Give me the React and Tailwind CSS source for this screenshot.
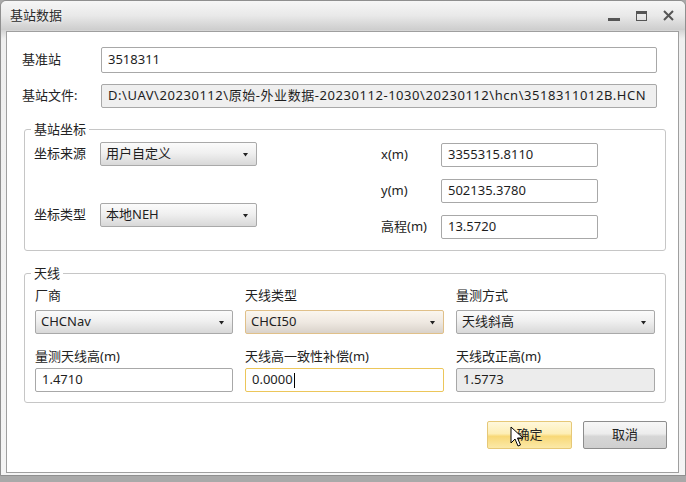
import React from 'react';

const font = { fontFamily: '"Noto Sans", "Noto Sans CJK SC", sans-serif' };

// combo box with the little windows triangle
const Select = ({ value, warm, className = '' }) => (
  <div
    className={`relative flex items-center h-[24px] pl-[5px] rounded-[2px] border text-[13px] text-[#1e1e1e] ${
      warm
        ? 'border-[#e0c089] bg-[linear-gradient(to_bottom,#fbf6ee,#efe9e2_50%,#d9d2ca)]'
        : 'border-[#a9a9a9] bg-[linear-gradient(to_bottom,#fbfbfb,#f0f0f0_45%,#d8d8d8)]'
    } ${className}`}
  >
    <span>{value}</span>
    <svg className="absolute right-[8px] top-[10px]" width="5" height="4" viewBox="0 0 5 4">
      <path d="M0 0h5L2.5 3.5z" fill="#222" />
    </svg>
  </div>
);

const Input = ({ value, className = '', gray, focus, caret }) => (
  <div
    className={`flex items-center pl-[6px] rounded-[2px] border text-[13px] text-[#1e1e1e] ${
      focus ? 'border-[#ecc65a]' : 'border-[#a8a8a8]'
    } ${gray ? 'bg-[#ececec]' : 'bg-white'} ${className}`}
  >
    <span>{value}</span>
    {caret && <span className="ml-px w-px h-[15px] bg-black" />}
  </div>
);

const Group = ({ title, className = '', children }) => (
  <fieldset className={`border border-[#c6c6c6] rounded-[3px] ${className}`}>
    <legend className="ml-[6px] px-[3px] text-[13px] leading-[18px] text-[#222]">{title}</legend>
    {children}
  </fieldset>
);

export default function App() {
  return (
    <div style={font} className="w-[686px] h-[482px] bg-[#a9a9a9] overflow-hidden">
      <div className="h-[476px] rounded-t-[6px] border border-[#8f8f8f] bg-[linear-gradient(to_bottom,#f4f4f4,#e6e6e6_4%,#d2d2d2_6%,#efefef_8%,#f4f4f4)] flex flex-col">
        {/* title bar */}
        <div className="h-[29px] flex items-center justify-between px-[9px] bg-[linear-gradient(to_bottom,#f6f6f6,#e9e9e9_50%,#cdcdcd)] rounded-t-[6px]">
          <span className="text-[13px] text-[#2b2b2b] [text-shadow:0_0_4px_#fff]">基站数据</span>
          <div className="flex items-center gap-[16px] pr-[2px]">
            <span className="mt-[8px] w-[12px] h-[3px] bg-[#555]" />
            <span className="w-[11px] h-[10px] border-[1.5px] border-[#555] border-t-[3px]" />
            <svg width="11" height="11" viewBox="0 0 11 11">
              <path d="M1 1l9 9M10 1l-9 9" stroke="#555" strokeWidth="2" />
            </svg>
          </div>
        </div>

        {/* client area */}
        <div className="relative ml-[5px] mr-[6px] mt-px h-[442px] border border-[#9f9f9f] bg-white text-[13px] text-[#222]">
          <div className="flex items-center mt-[15px] pl-[15px]">
            <span className="w-[79px]">基准站</span>
            <Input value="3518311" className="w-[556px] h-[26px]" />
          </div>
          <div className="flex items-center mt-[11px] pl-[15px]">
            <span className="w-[79px]">基站文件:</span>
            <Input
              value={'D:\\UAV\\20230112\\原始-外业数据-20230112-1030\\20230112\\hcn\\3518311012B.HCN'}
              gray
              className="w-[556px] h-[24px] !bg-[#efefef] tracking-[0.55px]"
            />
          </div>

          <Group title="基站坐标" className="ml-[17px] w-[642px] mt-[12px] pt-[4px] pb-[11px]">
            <div className="flex">
              <div className="flex flex-col gap-[37px] pl-[9px] w-[356px]">
                <div className="flex items-center">
                  <span className="w-[66px]">坐标来源</span>
                  <Select value="用户自定义" className="w-[157px]" />
                </div>
                <div className="flex items-center">
                  <span className="w-[66px]">坐标类型</span>
                  <Select value="本地NEH" className="w-[157px]" />
                </div>
              </div>
              <div className="flex flex-col gap-[12px] mt-[1px]">
                <div className="flex items-center">
                  <span className="w-[60px]">x(m)</span>
                  <Input value="3355315.8110" className="w-[157px] h-[24px]" />
                </div>
                <div className="flex items-center">
                  <span className="w-[60px]">y(m)</span>
                  <Input value="502135.3780" className="w-[157px] h-[24px]" />
                </div>
                <div className="flex items-center">
                  <span className="w-[60px]">高程(m)</span>
                  <Input value="13.5720" className="w-[157px] h-[24px]" />
                </div>
              </div>
            </div>
          </Group>

          <Group title="天线" className="ml-[17px] w-[642px] mt-[13px] pt-[4px] pb-[10px]">
            <div className="grid grid-cols-[198px_199px_199px] gap-x-[12px] pl-[10px]">
              <span className="leading-[18px]">厂商</span>
              <span className="leading-[18px]">天线类型</span>
              <span className="leading-[18px]">量测方式</span>
              <Select value="CHCNav" className="mt-[6px]" />
              <Select value="CHCI50" warm className="mt-[6px]" />
              <Select value="天线斜高" className="mt-[6px]" />
              <span className="mt-[13px] leading-[18px]">量测天线高(m)</span>
              <span className="mt-[13px] leading-[18px]">天线高一致性补偿(m)</span>
              <span className="mt-[13px] leading-[18px]">天线改正高(m)</span>
              <Input value="1.4710" className="mt-[3px] h-[24px]" />
              <Input value="0.0000" focus caret className="mt-[3px] h-[24px]" />
              <Input value="1.5773" gray className="mt-[3px] h-[24px]" />
            </div>
          </Group>

          <div className="flex mt-[18px] ml-[480px] gap-[11px]">
            <button className="w-[85px] h-[28px] rounded-[2px] border border-[#e6c878] bg-[linear-gradient(to_bottom,#fff8dc,#fdeeb5_45%,#f8d877_55%,#fbe9a8)] text-[13px] text-[#222]">
              确定
            </button>
            <button className="w-[84px] h-[28px] rounded-[2px] border border-[#8d8d8d] bg-[linear-gradient(to_bottom,#f7f7f7,#ececec_45%,#d6d6d6_55%,#cfcfcf)] text-[13px] text-[#222]">
              取消
            </button>
          </div>

          {/* mouse pointer over the OK button */}
          <svg className="absolute left-[503px] top-[394px]" width="14" height="22" viewBox="0 0 14 22">
            <path d="M1 1v16l4-4 3 7 2.5-1-3-7h5.5z" fill="#fff" stroke="#000" strokeWidth="1" strokeLinejoin="round" />
          </svg>
        </div>
      </div>
    </div>
  );
}
